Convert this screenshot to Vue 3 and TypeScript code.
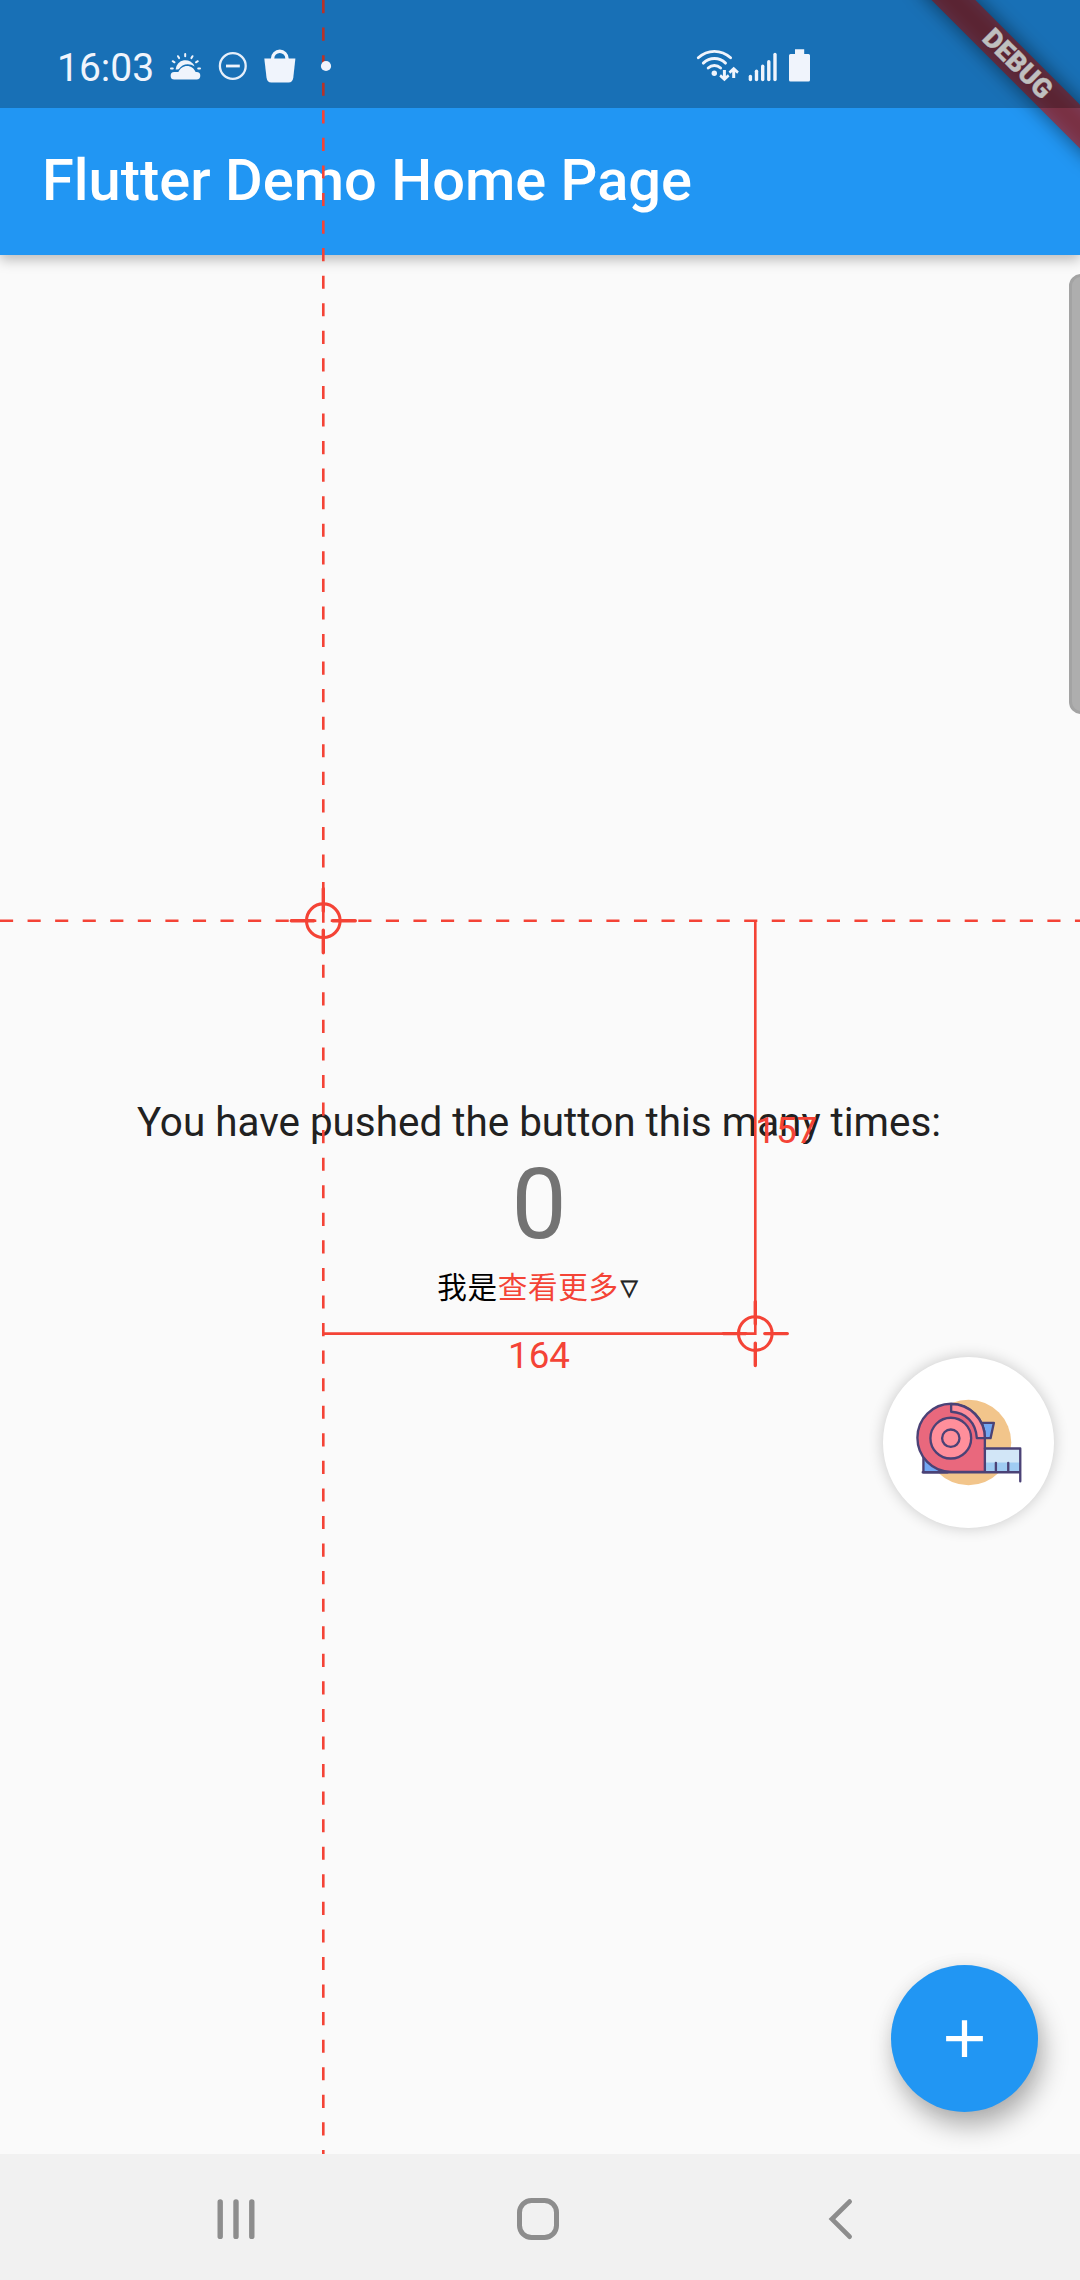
<script setup lang="ts">
import { ref } from 'vue'

interface Point {
  x: number
  y: number
}

const title = 'Flutter Demo Home Page'
const counter = ref<number>(0)

const origin: Point = { x: 323.3, y: 920.7 }
const target: Point = { x: 755.3, y: 1333.6 }
const handles: Point[] = [origin, target]
const signalBars: Point[] = [
  { x: 750.4, y: 76.4 },
  { x: 756.5, y: 71.2 },
  { x: 762.7, y: 66.2 },
  { x: 768.8, y: 61.8 },
  { x: 775, y: 54.4 },
]
</script>

<template>
  <div class="screen">
    <header class="app-bar">
      <h1>{{ title }}</h1>
    </header>

    <main class="body">
      <p class="message">You have pushed the button this many times:</p>
      <p class="count">{{ counter }}</p>
      <p class="more"><span>我是</span><span class="link">查看更多</span><span class="tri">▽</span></p>
    </main>

    <nav class="nav-bar">
      <svg width="1080" height="126" viewBox="0 2154 1080 126" fill="none" stroke="#8d8d8d">
        <path d="M220.2 2202v34.4M236 2202v34.4M251.8 2202v34.4" stroke-width="5.4" stroke-linecap="round" />
        <rect x="519.5" y="2200.5" width="37" height="37" rx="12" stroke-width="5" />
        <path d="M849.6 2201.6L832 2219.1L849.6 2236.6" stroke-width="4.8" stroke-linecap="round" />
      </svg>
    </nav>

    <div class="scroll-handle"></div>

    <button class="fab" aria-label="Increment" @click="counter++">
      <svg width="63" height="63" viewBox="0 0 24 24" fill="#fff"><path d="M19 13h-6v6h-2v-6H5v-2h6V5h2v6h6v2z" /></svg>
    </button>

    <div class="banner">
      <div class="banner-shadow"></div>
      <div class="banner-strip">DEBUG</div>
    </div>

    <!-- Ruler overlay: guides, measured distances and drag handles -->
    <svg class="ruler" width="1080" height="2154" viewBox="0 0 1080 2154" fill="none" stroke="#f44336">
      <g stroke-width="2.625">
        <path :d="`M${origin.x} 0V2154`" stroke-dasharray="13.125 14.4375" />
        <path :d="`M0 ${origin.y}H1080`" stroke-dasharray="13.125 14.4375" />
        <path :d="`M${origin.x} ${target.y}H${target.x}V${origin.y}`" />
      </g>
      <g v-for="p in handles" :key="p.x" :transform="`translate(${p.x} ${p.y})`" stroke-width="3.4" stroke-linecap="round">
        <circle r="16.8" stroke-width="3.1" />
        <path d="M-32 0H-9.5M9.5 0H32M0 -32V-9.5M0 9.5V32" />
      </g>
      <g class="distance" fill="#f44336" stroke="none">
        <text x="508" y="1367.5">164</text>
        <text x="755.3" y="1142.8">157</text>
      </g>
    </svg>

    <div class="floating-tool">
      <svg width="171" height="171" viewBox="69 50 512 512" stroke="#4b4276" stroke-width="7" stroke-linejoin="round">
        <circle cx="325" cy="306" r="128" fill="#f2c58b" stroke="none" />
        <path d="M190 345V395H262Z" fill="#72a7f2" />
        <path d="M374 324H480V394H374Z" fill="#d2e6f7" stroke="none" />
        <path d="M374 366H480V394H374Z" fill="#9fcbf2" stroke="none" />
        <path d="M362 247H401L391 293H362Z" fill="#72a7f2" />
        <path d="M374 293V394H273A101 102 0 1 1 374 293Z" fill="#e9687d" />
        <path d="M273 191A101 102 0 0 1 374 293H350C347 246 317 216 273 214Z" fill="#ff8f9b" />
        <circle cx="272" cy="293" r="61" fill="#ff8f9b" />
        <circle cx="272" cy="293" r="26" fill="#ff8f9b" />
        <path d="M188 395H480M374 324H480V422M407 367V394M444 367V394" fill="none" stroke-linecap="round" />
      </svg>
    </div>

    <div class="status-bar">
      <span class="clock">16:03</span>
      <svg class="status-icons" width="1080" height="108" viewBox="0 0 1080 108" fill="#f0f4fc">
        <!-- weather -->
        <path d="M174.500 79.500a3.700 3.700 0 0 1-.3-7.400h4.200c1.400-3.800 4.800-6.200 8.700-6.200s7.200 2.400 8.500 6.200h1a3.700 3.700 0 0 1 0 7.400z" />
        <path d="M175.600 69.500a9.800 9.800 0 0 1 19-2.900c-5.400-4.200-12.600-2.600-15.900 2.600-1.100.2-2.200.2-3.100.3z" />
        <g stroke="#f0f4fc" stroke-width="2" stroke-linecap="round">
          <path d="M185.200 54v2.200M178 56.200l1.100 1.900M192.500 56.200l-1.100 1.900M172.700 61.200l1.800 1.100M197.800 61.200l-1.800 1.100M171 68.600h1.800M198.200 68.600h1.800" />
        </g>
        <!-- do not disturb -->
        <circle cx="232.800" cy="66" r="12.900" fill="none" stroke="#e6effa" stroke-width="2.300" />
        <path d="M226 64.600h13.800v2.800H226z" />
        <!-- shopping bag -->
        <path d="M264.300 58.600H295.400L293.300 77.500C292.800 81 291.400 82.600 288.500 82.600H271.300C268.400 82.600 267 81 266.500 77.500Z" />
        <path d="M272.600 60v-1.500a7.200 7.200 0 0 1 14.400 0V60" fill="none" stroke="#f0f4fc" stroke-width="3.400" />
        <circle cx="326" cy="66" r="5.100" />
        <!-- wifi -->
        <g fill="none" stroke="#f0f4fc" stroke-width="2.900" stroke-linecap="round">
          <path d="M698.300 57.800C707.500 49.200 721.200 49.200 730.600 57.800M703.300 63.100C709.800 57 719.200 57 725.500 63.100M708.200 68C711.800 64.700 717 64.700 720.600 68" />
        </g>
        <circle cx="714.300" cy="73.200" r="2.700" />
        <path d="M722.900 70h3v6l2-1.800 1.600 2.200-5.100 4.800-5.100-4.800 1.600-2.200 2 1.800zM732.200 78v-6l-2 1.800-1.600-2.200 5.100-4.900 5.100 4.900-1.600 2.200-2-1.800v6z" />
        <!-- signal -->
        <path v-for="bar in signalBars" :key="bar.x" :d="`M${bar.x} ${bar.y}V79.600`" stroke="#f0f4fc" stroke-width="3.400" stroke-linecap="round" />
        <!-- battery -->
        <path d="M795 49.300h9.200v4.700h4.300a1.500 1.500 0 0 1 1.500 1.500v24.500a1.500 1.500 0 0 1-1.500 1.500h-18a1.500 1.500 0 0 1-1.500-1.500v-24.500a1.500 1.500 0 0 1 1.500-1.500h4.500z" />
      </svg>
    </div>
  </div>
</template>

<style>
body {
  margin: 0;
}
</style>

<style scoped>
.screen {
  position: relative;
  display: flex;
  flex-direction: column;
  width: 1080px;
  height: 2280px;
  overflow: hidden;
  background: #fafafa;
  font-family: Roboto, 'Noto Sans CJK SC', sans-serif;
}

.app-bar {
  display: flex;
  align-items: center;
  box-sizing: border-box;
  flex: none;
  height: 255px;
  padding: 108px 42px 4px;
  background: #2196f3;
  box-shadow: 0 5px 12px rgba(0, 0, 0, 0.25);
}

h1 {
  margin: 0;
  color: #fff;
  font-size: 57.8px;
  font-weight: 500;
  line-height: 68px;
  white-space: nowrap;
}

.body {
  display: flex;
  flex: 1;
  flex-direction: column;
  align-items: center;
  justify-content: center;
  padding: 3px 2px 0 0;
}

.body p {
  margin: 0;
  white-space: nowrap;
}

.message {
  color: #212121;
  font-size: 40.425px;
  line-height: 47px;
}

.count {
  color: #737373;
  font-size: 98.175px;
  line-height: 117px;
}

.more {
  display: flex;
  color: #000;
  font-size: 29.6px;
  line-height: 50px;
  letter-spacing: 0.66px;
}

.link {
  color: #f44336;
}

.tri {
  width: 20px;
  margin-left: 2px;
  color: #212121;
  font-family: 'DejaVu Sans', sans-serif;
  font-size: 22px;
  -webkit-text-stroke: 0.8px #212121;
}

.nav-bar {
  flex: none;
  height: 126px;
  background: #f1f1f1;
}

.nav-bar svg {
  display: block;
}

.scroll-handle {
  position: absolute;
  top: 274px;
  right: -4px;
  box-sizing: border-box;
  width: 15px;
  height: 440px;
  border: 3px solid #a3a3a3;
  border-radius: 12px 0 0 12px;
  background: #aeaeae;
}

.fab {
  position: absolute;
  top: 1965px;
  left: 891px;
  display: flex;
  align-items: center;
  justify-content: center;
  width: 147px;
  height: 147px;
  padding: 0;
  border: 0;
  border-radius: 50%;
  background: #2196f3;
  box-shadow: 5px 14px 26px rgba(0, 0, 0, 0.3), 0 0 18px rgba(0, 0, 0, 0.05);
}

.banner {
  position: absolute;
  top: 0;
  right: 0;
  width: 0;
  height: 0;
  transform: rotate(45deg);
}

.banner-shadow,
.banner-strip {
  position: absolute;
  top: 73.5px;
  left: -125px;
  width: 250px;
  height: 31.5px;
}

.banner-shadow {
  background: rgba(0, 0, 0, 0.5);
  filter: blur(10px);
}

.banner-strip {
  box-sizing: border-box;
  padding-left: 2px;
  background: rgba(183, 28, 28, 0.627);
  color: #fff;
  font-size: 26.8px;
  font-weight: 900;
  line-height: 31.5px;
  text-align: center;
  -webkit-text-stroke: 0.3px #fff;
}

.ruler {
  position: absolute;
  top: 0;
  left: 0;
  pointer-events: none;
}

.distance {
  font-size: 36.75px;
}

.floating-tool {
  position: absolute;
  top: 1356.5px;
  left: 883px;
  width: 171px;
  height: 171px;
  border-radius: 50%;
  background: #fff;
  box-shadow: 0 0 15px rgba(0, 0, 0, 0.2);
}

.floating-tool svg {
  display: block;
}

.status-bar {
  position: absolute;
  top: 0;
  left: 0;
  width: 1080px;
  height: 108px;
  background: rgba(0, 0, 0, 0.25);
}

.clock {
  display: block;
  padding: 45px 0 0 57px;
  color: #f0f4fc;
  font-size: 39px;
  line-height: 46px;
}

.status-icons {
  position: absolute;
  top: 0;
  left: 0;
}
</style>
